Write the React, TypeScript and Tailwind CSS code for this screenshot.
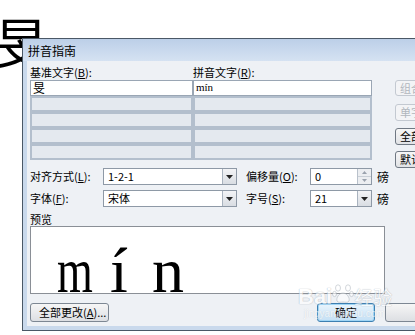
import React from 'react'

const CJK = '"Noto Sans CJK SC", "Liberation Sans", sans-serif'

function DropBtn() {
  return (
    <div className="flex h-full w-[14px] items-center justify-center border-l border-[#a9b3bf] bg-gradient-to-b from-[#f3f4f6] to-[#d9dde3]">
      <svg width="7" height="4" viewBox="0 0 7 4">
        <path d="M0 0h7L3.5 4z" fill="#222" />
      </svg>
    </div>
  )
}

function SpinBtn() {
  return (
    <div className="flex h-full w-[14px] flex-col border-l border-[#b9c1cb] bg-[#eceef1]">
      <div className="flex flex-1 items-center justify-center border-b border-[#c9cfd6]">
        <svg width="5" height="3" viewBox="0 0 5 3">
          <path d="M0 3h5L2.5 0z" fill="#9aa2ad" />
        </svg>
      </div>
      <div className="flex flex-1 items-center justify-center">
        <svg width="5" height="3" viewBox="0 0 5 3">
          <path d="M0 0h5L2.5 3z" fill="#9aa2ad" />
        </svg>
      </div>
    </div>
  )
}

function Combo({ value, w, spin }: { value: string; w: string; spin?: boolean }) {
  return (
    <div className={`flex h-full ${w} items-stretch border border-[#8e99a6] bg-white`}>
      <div className="flex-1 pl-[4px] text-[11px] leading-[15px] text-black">{value}</div>
      {spin ? <SpinBtn /> : <DropBtn />}
    </div>
  )
}

function GridRow({ first, left, right }: { first?: boolean; left?: string; right?: string }) {
  const cell = first
    ? 'bg-white border border-[#9aa6b4]'
    : 'bg-[#e4e9ef] border-2 border-[#b3bfcd]'
  return (
    <div className="flex h-[16px]">
      <div className={`w-[163px] ${cell} pl-[2px] text-[12px] leading-[13px]`}>{left}</div>
      <div className={`w-[179px] ${cell} pl-[2px] text-[11px] leading-[13px]`} style={{ fontFamily: '"Liberation Serif", serif' }}>
        {right}
      </div>
    </div>
  )
}

function SideBtn({ label, enabled }: { label: string; enabled?: boolean }) {
  return (
    <div
      className={`h-[17px] w-[40px] overflow-hidden whitespace-nowrap rounded-[3px] border pl-[4px] text-[11px] leading-[15px] ${
        enabled ? 'border-[#6f7883] bg-gradient-to-b from-[#f7f7f7] to-[#e1e3e6] text-black' : 'border-[#c3c9d1] bg-[#f3f4f6] text-[#b0b6bd]'
      }`}
    >
      {label}
    </div>
  )
}

export default function App() {
  return (
    <div className="relative h-[335px] w-[415px] overflow-hidden bg-white" style={{ fontFamily: CJK }}>
      {/* document character behind dialog */}
      <div className="absolute left-[-6px] top-[14px] text-[54px] leading-none text-black">旻</div>

      {/* dialog */}
      <div className="absolute left-[22px] top-[38px] flex h-[293px] w-[420px] flex-col border-y border-l border-[#4a5866] bg-[#c9d9ec]">
        <div className="h-[22px] bg-gradient-to-b from-[#bccfe8] to-[#d5e2f2] pl-[5px] text-[12px] leading-[23px] text-black">
          拼音指南
        </div>
        <div className="ml-[4px] mb-[4px] flex-1 bg-[#eef1f5] pl-[3px] text-black">
          <div className="mt-[3px] flex h-[16px] text-[11px] leading-[16px]">
            <div className="w-[163px]">基准文字(<u>B</u>):</div>
            <div>拼音文字(<u>R</u>):</div>
          </div>

          <div className="flex h-[88px]">
            <div className="flex w-[342px] flex-col">
              <GridRow first left="旻" right="mín" />
              <GridRow />
              <GridRow />
              <GridRow />
              <GridRow />
            </div>
            <div className="ml-[23px] flex flex-col">
              <SideBtn label="组合" />
              <div className="mt-[8px]">
                <SideBtn label="单字" />
              </div>
              <div className="mt-[7px]">
                <SideBtn label="全部删除" enabled />
              </div>
              <div className="mt-[6px]">
                <SideBtn label="默认读音" enabled />
              </div>
            </div>
          </div>

          <div className="flex h-[17px] items-center text-[11px]">
            <div className="w-[73px]">对齐方式(<u>L</u>):</div>
            <Combo value="1-2-1" w="w-[134px]" />
            <div className="ml-[9px] w-[64px]">偏移量(<u>O</u>):</div>
            <Combo value="0" w="w-[62px]" spin />
            <div className="ml-[5px] text-[12px]">磅</div>
          </div>
          <div className="mt-[5px] flex h-[17px] items-center text-[11px]">
            <div className="w-[73px]">字体(<u>F</u>):</div>
            <Combo value="宋体" w="w-[134px]" />
            <div className="ml-[9px] w-[64px]">字号(<u>S</u>):</div>
            <Combo value="21" w="w-[62px]" />
            <div className="ml-[5px] text-[12px]">磅</div>
          </div>

          <div className="mt-[5px] h-[14px] text-[11px] leading-[14px]">预览</div>
          <div className="flex h-[68px] w-[355px] items-end overflow-hidden border border-[#8a8f96] bg-white pl-[26px]">
            <div
              className="mb-[-1px] flex items-end text-[64px] leading-[0.72] text-black"
              style={{ fontFamily: '"Liberation Serif", serif' }}
            >
              <span className="inline-block w-[36px] origin-left scale-x-[0.72]">m</span>
              <span className="ml-[17px] inline-block w-[14px]">í</span>
              <span className="ml-[28px] inline-block w-[32px]">n</span>
            </div>
          </div>

          <div className="mt-[9px] flex h-[19px] text-[11px]">
            <div className="w-[90px] rounded-[3px] border border-[#7d8793] bg-gradient-to-b from-[#f6f6f6] to-[#dddfe3] pl-[8px] leading-[17px]">
              全部更改(<u>A</u>)...
            </div>
            <div className="ml-[208px] w-[66px] rounded-[3px] border border-[#3c7fb1] bg-gradient-to-b from-[#eaf5fd] to-[#c4e0f5] text-center leading-[17px] shadow-[inset_0_0_0_1px_#9fd5f5]">
              确定
            </div>
            <div className="ml-[10px] w-[66px] rounded-[3px] border border-[#7d8793] bg-gradient-to-b from-[#f6f6f6] to-[#dddfe3]" />
          </div>
        </div>
      </div>

      {/* watermark */}
      <div className="pointer-events-none absolute left-[298px] top-[282px] flex flex-col items-start opacity-60">
        <div className="flex items-end">
          <span
            className="text-[22px] font-bold leading-[22px] text-white"
            style={{ fontFamily: '"Liberation Sans", sans-serif', textShadow: '0 0 1px #9aa3ad, 0 0 1px #9aa3ad' }}
          >
            Bai
          </span>
          <svg width="22" height="22" viewBox="0 0 22 22" className="mb-[4px]">
            <g fill="white" stroke="#a5adb6" strokeWidth="0.8">
              <ellipse cx="6" cy="6" rx="2.5" ry="3.2" />
              <ellipse cx="16" cy="6" rx="2.5" ry="3.2" />
              <ellipse cx="2.5" cy="12" rx="2" ry="2.6" />
              <ellipse cx="19.5" cy="12" rx="2" ry="2.6" />
              <path d="M11 11c-4 0-7 5-6 8 1 2 4 1 6 1s5 1 6-1c1-3-2-8-6-8z" />
            </g>
          </svg>
          <span
            className="text-[19px] leading-[22px] text-white"
            style={{ textShadow: '0 0 1px #9aa3ad, 0 0 1px #9aa3ad' }}
          >
            经验
          </span>
        </div>
        <span
          className="ml-[6px] text-[10px] leading-[12px] text-white"
          style={{ fontFamily: '"Liberation Sans", sans-serif', textShadow: '0 0 1px #b0b7bf' }}
        >
          jingyan.baidu.com
        </span>
      </div>
    </div>
  )
}
